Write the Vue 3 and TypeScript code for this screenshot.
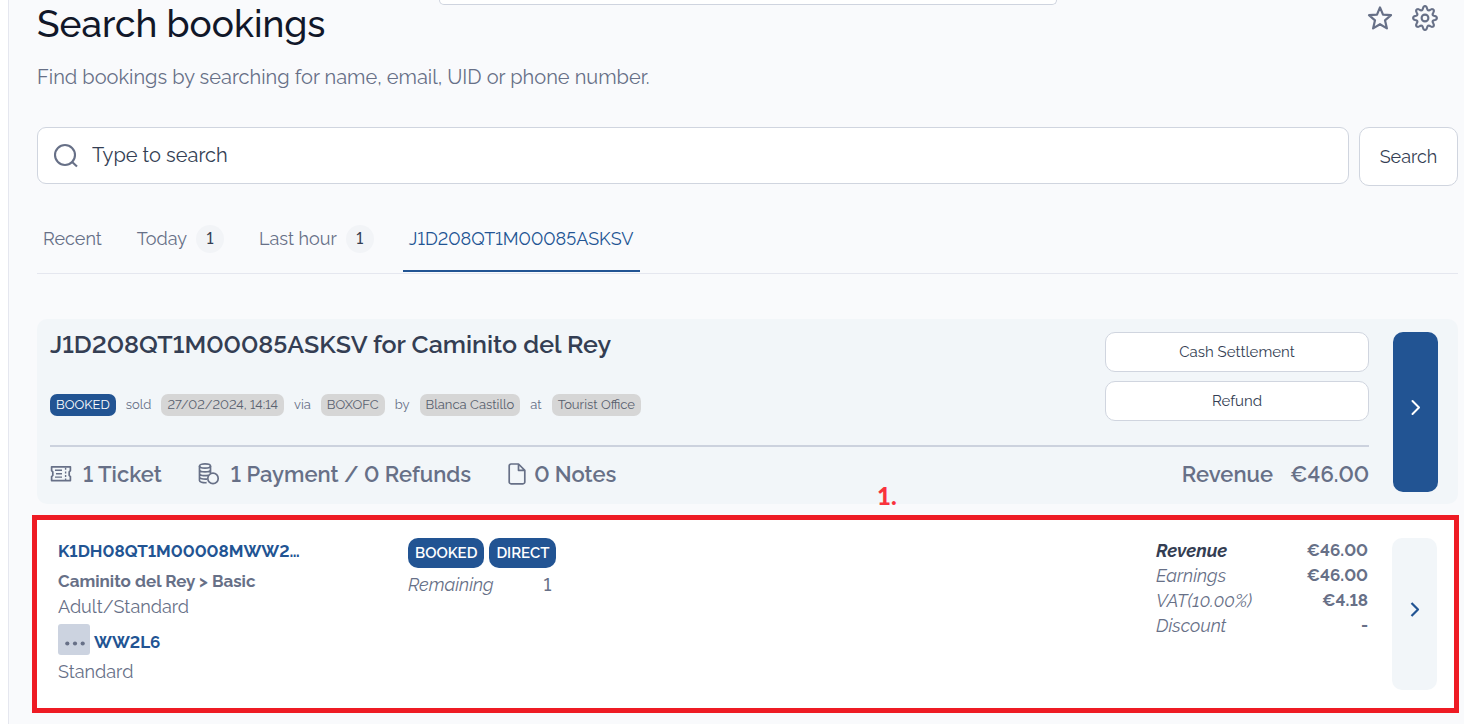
<script setup lang="ts">
import { ref } from 'vue'

interface Tab { label: string; count?: number }
interface Amount { label: string; value: string; strong?: boolean }

const query = ref('')
const active = ref(3)
const tabs: Tab[] = [
  { label: 'Recent' },
  { label: 'Today', count: 1 },
  { label: 'Last hour', count: 1 },
  { label: 'J1D208QT1M00085ASKSV' },
]
const amounts: Amount[] = [
  { label: 'Revenue', value: '€46.00', strong: true },
  { label: 'Earnings', value: '€46.00' },
  { label: 'VAT(10.00%)', value: '€4.18' },
  { label: 'Discount', value: '-' },
]

// Outline of the eight-toothed cog: a circle whose radius swings between tooth and notch.
const cog = 'M' + Array.from({ length: 96 }, (_, i) => {
  const t = (i / 96) * Math.PI * 2
  const wave = Math.cos(8 * t)
  const r = 10.1 + 1.8 * Math.sign(wave) * Math.pow(Math.abs(wave), 0.7)
  return `${(13 + r * Math.cos(t)).toFixed(2)} ${(13 + r * Math.sin(t)).toFixed(2)}`
}).join(' L') + ' Z'
</script>

<template>
  <div class="shell">
    <div class="rail"></div>
    <main class="main">
      <div class="topbox"></div>

      <header class="head">
        <h1>Search bookings</h1>
        <div class="tools">
          <button class="tool" type="button" aria-label="Favourite">
            <svg width="26" height="26" viewBox="0 0 26 26" fill="none" stroke="currentColor" stroke-width="2.2" stroke-linejoin="round">
              <path d="M13 2.4 L16 9.6 L24 10.2 L18 15.3 L19.9 23.4 L13 19.2 L6.1 23.4 L8 15.3 L2 10.2 L10 9.6 Z" />
            </svg>
          </button>
          <button class="tool" type="button" aria-label="Settings">
            <svg width="26" height="26" viewBox="0 0 26 26" fill="none" stroke="currentColor" stroke-width="2.1" stroke-linejoin="round">
              <path :d="cog" />
              <circle cx="13" cy="13" r="3.4" />
            </svg>
          </button>
        </div>
      </header>
      <p class="lead">Find bookings by searching for name, email, UID or phone number.</p>

      <form class="search" @submit.prevent>
        <label class="field">
          <svg width="26" height="26" viewBox="0 0 26 26" fill="none" stroke="currentColor" stroke-width="2.1">
            <circle cx="12" cy="12" r="10" />
            <path d="M18.6 18.6 L24 23.6" />
          </svg>
          <input v-model="query" type="text" placeholder="Type to search" aria-label="Type to search" />
        </label>
        <button class="btn submit" type="submit">Search</button>
      </form>

      <nav class="tabs">
        <button
          v-for="(tab, i) in tabs"
          :key="tab.label"
          type="button"
          class="tab"
          :class="{ on: active === i }"
          @click="active = i"
        >
          {{ tab.label }}<span v-if="tab.count" class="count">{{ tab.count }}</span>
        </button>
      </nav>

      <section class="booking">
        <div class="body">
          <div class="upper">
            <div>
              <h2>J1D208QT1M00085ASKSV for Caminito del Rey</h2>
              <div class="meta">
                <span class="tag blue">BOOKED</span>
                <span>sold</span>
                <span class="tag">27/02/2024, 14:14</span>
                <span>via</span>
                <span class="tag">BOXOFC</span>
                <span>by</span>
                <span class="tag">Blanca Castillo</span>
                <span>at</span>
                <span class="tag">Tourist Office</span>
              </div>
            </div>
            <div class="actions">
              <button class="btn" type="button">Cash Settlement</button>
              <button class="btn" type="button">Refund</button>
            </div>
          </div>
          <div class="totals">
            <span class="stat">
              <svg width="22" height="24" viewBox="0 0 22 24" fill="none" stroke="currentColor" stroke-width="1.7">
                <path d="M1.6 4.8 H20.4 V8.6 L19.2 9.8 V13.4 L20.4 14.6 V18.6 H1.6 V14.6 L2.8 13.4 V9.8 L1.6 8.6 Z" stroke-linejoin="round" />
                <path d="M5 8.3 H12 M6 11.7 H12 M5 15.1 H12" stroke-width="1.4" />
                <path d="M15.6 5.8 V18" stroke-width="1.4" stroke-dasharray="2 1.6" />
              </svg>
              1 Ticket
            </span>
            <span class="stat">
              <svg width="22" height="24" viewBox="0 0 22 24" fill="none" stroke="currentColor" stroke-width="1.7">
                <ellipse cx="7" cy="4" rx="5.5" ry="2.2" />
                <path d="M1.5 4 V18.5 C1.5 20 4.5 20.9 8.6 20.7 M12.5 4 V11 M1.5 7.7 C1.5 10.6 12.5 10.6 12.5 7.7 M1.5 11.4 C1.5 13.6 6 14.1 10 13.4 M1.5 15 C1.5 16.6 5 17.4 9 17.1" />
                <circle cx="15" cy="16.4" r="5.2" />
              </svg>
              1 Payment / 0 Refunds
            </span>
            <span class="stat notes">
              <svg width="20" height="24" viewBox="0 0 20 24" fill="none" stroke="currentColor" stroke-width="1.7" stroke-linejoin="round">
                <path d="M4 2 H11.5 L17.8 8.3 V20 A1.8 1.8 0 0 1 16 21.8 H4 A1.8 1.8 0 0 1 2.2 20 V3.8 A1.8 1.8 0 0 1 4 2 Z M11.5 2 V8.3 H17.8" />
              </svg>
              0 Notes
            </span>
            <span class="sum"><span>Revenue</span><span>€46.00</span></span>
          </div>
        </div>
        <button class="open dark" type="button" aria-label="Open booking">
          <svg width="12" height="18" viewBox="0 0 12 18" fill="none" stroke="currentColor" stroke-width="2" stroke-linecap="round" stroke-linejoin="round"><path d="M2.5 3 L9 9.5 L2.5 16" /></svg>
        </button>
        <span class="callout">1.</span>
      </section>

      <section class="ticket-frame">
        <div class="who">
          <a class="uid" href="#">K1DH08QT1M00008MWW2…</a>
          <div class="product">Caminito del Rey &gt; Basic</div>
          <div class="line">Adult/Standard</div>
          <div class="short">
            <button class="more" type="button" aria-label="Show full code">
              <svg width="20" height="5" viewBox="0 0 20 5" fill="currentColor"><circle cx="2.3" cy="2.5" r="2.1" /><circle cx="10" cy="2.5" r="2.1" /><circle cx="17.7" cy="2.5" r="2.1" /></svg>
            </button>
            <a class="uid" href="#">WW2L6</a>
          </div>
          <div class="line">Standard</div>
        </div>
        <div class="state">
          <div class="pills"><span class="pill">BOOKED</span><span class="pill">DIRECT</span></div>
          <div class="remaining"><em>Remaining</em><span>1</span></div>
        </div>
        <dl class="amounts">
          <div v-for="a in amounts" :key="a.label" :class="{ strong: a.strong }">
            <dt>{{ a.label }}</dt>
            <dd>{{ a.value }}</dd>
          </div>
        </dl>
        <button class="open light" type="button" aria-label="Open ticket">
          <svg width="12" height="18" viewBox="0 0 12 18" fill="none" stroke="currentColor" stroke-width="2.2" stroke-linejoin="round"><path d="M2.5 3 L9 9.5 L2.5 16" /></svg>
        </button>
      </section>
    </main>
  </div>
</template>

<style>
body { background: #f9fafc; }
</style>

<style scoped>
* { box-sizing: border-box; }
.shell {
  display: flex;
  min-height: 100vh;
  background: #f9fafc;
  color: #677087;
  font-family: Raleway, Lato, sans-serif;
  font-variant-numeric: lining-nums;
  font-size: 18px;
  line-height: 25px;
}
button, input { font: inherit; font-variant-numeric: lining-nums; color: inherit; }
button { cursor: pointer; padding: 0; border: 0; background: none; }
h1, h2, p, dl, dd { margin: 0; }
.rail { flex: 0 0 9px; background: #fff; border-right: 1px solid #e5e7ef; }
.main { flex: 1; min-width: 0; padding: 0 6px 11px 28px; }
.topbox {
  width: 618px;
  max-width: 60%;
  height: 5px;
  margin: 0 auto;
  background: #fff;
  border: 1px solid #cfd4df;
  border-top: 0;
  border-radius: 0 0 8px 8px;
}
.head { display: flex; justify-content: space-between; align-items: flex-start; }
h1 { color: #111729; font-size: 37px; font-weight: 500; line-height: 38px; }
.tools { display: flex; gap: 19px; padding-right: 20px; }
.tool { display: block; height: 26px; }
.tool svg { display: block; }
.lead { margin-top: 22px; font-size: 20px; line-height: 24px; }
.search { display: flex; align-items: flex-start; gap: 10px; margin-top: 38px; }
.field {
  flex: 1;
  display: flex;
  align-items: center;
  gap: 13px;
  height: 57px;
  padding: 0 15px;
  background: #fff;
  border: 1px solid #d0d5df;
  border-radius: 9px;
}
.field input { flex: 1; min-width: 0; border: 0; outline: 0; background: none; font-size: 20px; padding: 0; color: #343e53; }
.field input::placeholder { color: #343e53; opacity: 1; }
.btn { background: #fff; border: 1px solid #d0d5df; border-radius: 10px; color: #343e53; }
.submit { width: 99px; height: 59px; font-size: 18px; }
.tabs { display: flex; align-items: flex-start; gap: 23px; margin-top: 34px; border-bottom: 1px solid #e5e7ef; }
.tab { display: flex; align-items: center; height: 52px; padding: 0 6px 13px; border-bottom: 2px solid transparent; margin-bottom: 1px; }
.tab.on { color: #225493; border-color: #225493; }
.count { width: 28px; margin-left: 9px; border-radius: 14px; background: #f2f4f7; color: #343e53; font-size: 16px; font-weight: 500; line-height: 28px; text-align: center; }
.booking {
  position: relative;
  display: flex;
  gap: 24px;
  margin-top: 45px;
  padding: 13px 20px 12px 13px;
  background: #f2f6f9;
  border-radius: 10px;
}
.body { flex: 1; min-width: 0; }
.upper { display: flex; justify-content: space-between; height: 113px; }
h2 { color: #343e53; font-size: 25px; font-weight: 600; line-height: 25px; }
.meta { display: flex; align-items: center; gap: 10px; margin-top: 37px; font-size: 13px; line-height: 22px; }
.tag { padding: 0 6px; border-radius: 7px; background: #d6d6d6; color: #59616f; }
.tag.blue { background: #225493; color: #fff; }
.actions { display: grid; gap: 9px; width: 264px; align-content: start; }
.actions .btn { height: 40px; font-size: 15px; }
.totals { display: flex; align-items: center; padding-top: 13px; border-top: 2px solid #ccd2de; font-size: 22px; line-height: 28px; font-weight: 600; }
.stat { display: flex; align-items: center; gap: 11px; margin-right: 36px; }
.stat.notes { gap: 7px; }
.sum { display: flex; gap: 17px; margin-left: auto; }
.open { display: flex; align-items: center; justify-content: center; flex: 0 0 45px; padding-bottom: 10px; border-radius: 10px; }
.open.dark { background: #225493; color: #fff; height: 160px; }
.open.light { background: #f2f6f9; color: #225493; height: 152px; }
.callout { position: absolute; left: 840px; bottom: -4px; color: #f9323c; font-family: Lato, sans-serif; font-size: 24px; font-weight: 900; }
.ticket-frame {
  display: flex;
  align-items: flex-start;
  margin: 11px -1px 0 -5px;
  padding: 18px 17px 18px 21px;
  border: 5px solid #ee1b24;
  background: #fff;
}
.who { width: 350px; }
.uid { color: #225493; font-size: 17px; font-weight: 700; text-decoration: none; }
.product { margin-top: 5px; font-size: 17px; font-weight: 700; }
.short { display: flex; align-items: flex-end; gap: 4px; margin: 5px 0 4px; }
.more { display: flex; align-items: center; justify-content: center; width: 32px; height: 31px; padding: 8px 0 0 2px; border-radius: 3px; background: #ccd3e0; }
.pills { display: flex; gap: 5px; }
.pill { padding: 0 7px; border-radius: 10px; background: #225493; color: #fff; font-size: 15px; font-weight: 600; line-height: 30px; }
.remaining { display: flex; justify-content: space-between; padding: 4px 5px 0 0; }
.remaining span { font-weight: 500; }
.amounts { width: 212px; margin-left: auto; margin-right: 24px; }
.amounts div { display: flex; justify-content: space-between; }
.amounts dt { font-style: italic; }
.amounts dd { font-size: 17px; font-weight: 700; }
.amounts .strong dt { font-weight: 700; color: #343e53; }
</style>
